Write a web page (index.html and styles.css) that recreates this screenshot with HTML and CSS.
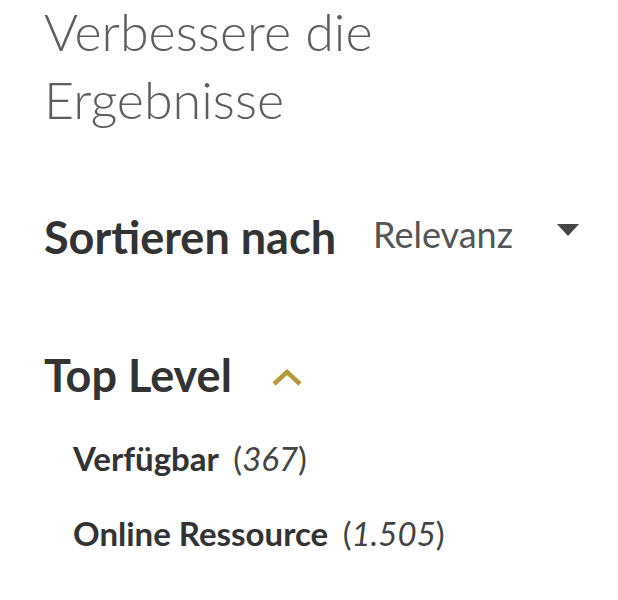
FILE: index.html
```html
<!DOCTYPE html>
<html lang="de">
<head>
    <meta charset="UTF-8">
    <meta name="viewport" content="width=device-width, initial-scale=1.0">
    <title>Filter</title>
    <link rel="stylesheet" href="styles.css">
</head>
<body>

<div class="facets">
    <h2 class="title"><span>Verbessere die</span> <span>Ergebnisse</span></h2>

    <div class="sort">
        <span class="sort-label">Sortieren nach</span>
        <div class="sort-select">
            <span>Relevanz</span>
            <svg class="caret" width="22" height="12" viewBox="0 0 22 12"><path d="M0 0 L22 0 L11 12 Z" fill="#444"/></svg>
        </div>
    </div>

    <div class="group">
        <div class="group-head">
            <span>Top Level</span>
            <svg class="chevron" width="32" height="20" viewBox="0 0 32 20"><path d="M3 17 L16 5 L29 17" fill="none" stroke="#b5993a" stroke-width="4.5"/></svg>
        </div>
        <ul class="options">
            <li><strong>Verfügbar</strong> (<em>367</em>)</li>
            <li><strong>Online Ressource</strong> (<em>1.505</em>)</li>
        </ul>
    </div>
</div>

</body>
</html>
```

FILE: styles.css
```css
body { font-family: Lato, "Noto Sans", sans-serif; margin: 0; padding: 0; color: #333; background: #fff; }
.facets { padding: 0 39px 0 44px; }

/* Heading */
.title { font-size: 52px; font-weight: 300; color: #5e5e5e; line-height: 62px; margin: 0; }
.title span { display: block; }
.title span + span { margin-top: 6px; }

/* Sort row */
.sort { display: flex; align-items: center; margin-top: 77px; line-height: 54px; }
.sort-label { font-size: 45px; font-weight: 700; color: #333; }
.sort-select { display: flex; align-items: center; justify-content: space-between; margin-left: 37px; flex: 1; font-size: 36px; color: #555; padding-bottom: 5px; }
.caret { display: block; margin-bottom: 8px; }

/* Facet group */
.group { margin-top: 82px; }
.group-head { display: flex; align-items: center; font-size: 45px; line-height: 54px; font-weight: 700; color: #333; }
.chevron { display: block; margin: 4px 0 0 39px; }
.options { list-style: none; padding: 0 0 0 29px; margin: 36px 0 0; }
.options li { font-size: 33px; line-height: 40px; color: #444; margin: 0 0 35px; }
.options strong { color: #333; margin-right: 6px; }
.options em { font-style: italic; font-weight: 400; }
```
